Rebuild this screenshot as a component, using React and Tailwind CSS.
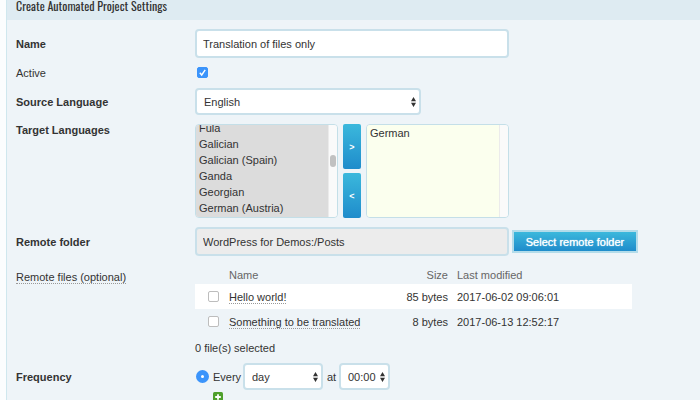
import { useEffect, useRef, useState } from "react";

const LANGUAGES = [
  "Croatian", "Czech", "Danish", "Divehi", "Dutch", "Dzongkha", "Esperanto",
  "Estonian", "Ewe", "Faroese", "Fijian", "Finnish", "French",
  "French (Canada)", "Fula", "Galician", "Galician (Spain)", "Ganda",
  "Georgian", "German (Austria)", "German (Switzerland)", "Greek", "Guarani",
  "Gujarati", "Haitian", "Hausa", "Hebrew", "Hindi", "Hungarian", "Icelandic",
  "Igbo", "Indonesian", "Irish", "Italian", "Japanese", "Javanese", "Kannada",
  "Kazakh", "Khmer", "Korean", "Kurdish", "Lao", "Latvian", "Lithuanian",
];

const FILES = [
  { name: "Hello world!", size: "85 bytes", modified: "2017-06-02 09:06:01" },
  { name: "Something to be translated", size: "8 bytes", modified: "2017-06-13 12:52:17" },
];

const OPTION_HEIGHT = 16;
const THUMB_HEIGHT = 12;
const field = "rounded border-2 border-[#c9e0ea] text-[11px] text-[#333] outline-none";
const blue = "bg-linear-to-b from-[#3bb8dc] to-[#1f8ccb] text-white";

function Row({ label, htmlFor, bold = true, top = false, labelClass = "", children }) {
  return (
    <div className={`grid grid-cols-[179px_1fr] ${top ? "items-start" : "items-center"}`}>
      <div className="flex">
        <label htmlFor={htmlFor} className={`${bold ? "font-bold" : ""} ${labelClass}`}>
          {label}
        </label>
      </div>
      <div className="min-w-0">{children}</div>
    </div>
  );
}

function Select({ id, label, className, options }) {
  return (
    <span className={`relative flex ${className}`}>
      <select
        id={id}
        aria-label={label}
        className={`${field} h-[27px] w-full appearance-none bg-white pl-[7px]`}
      >
        {options.map((o) => (
          <option key={o}>{o}</option>
        ))}
      </select>
      <svg
        viewBox="0 0 5 10"
        className="pointer-events-none absolute top-[9px] right-[5px] h-[10px] w-[5px] fill-[#333]"
        aria-hidden="true"
      >
        <path d="M2.5 0 5 4.2H0ZM2.5 10 0 5.8h5Z" />
      </svg>
    </span>
  );
}

function Listbox({ id, label, className, items, initial }) {
  const list = useRef(null);
  const [thumb, setThumb] = useState(null);

  const update = () => {
    const el = list.current;
    const range = el.scrollHeight - el.clientHeight;
    setThumb(range > 0 ? (el.scrollTop / range) * (el.clientHeight - THUMB_HEIGHT) : null);
  };

  useEffect(() => {
    if (initial) list.current.scrollTop = items.indexOf(initial) * OPTION_HEIGHT + 5;
    update();
  }, []);

  return (
    <div className="flex h-[94px] w-[143px] overflow-hidden rounded border border-[#c4dfe8]">
      <select
        id={id}
        ref={list}
        multiple
        aria-label={label}
        onScroll={update}
        className={`min-w-0 flex-1 overflow-y-auto py-[2px] text-[11px] outline-none [scrollbar-width:none] ${className}`}
      >
        {items.map((item) => (
          <option key={item} className="h-4 min-h-4 px-[3px] py-0 leading-4 text-[#333]">{item}</option>
        ))}
      </select>
      <div className="w-[9px] border-l border-[#ebebeb] bg-[#fafafa]" aria-hidden="true">
        {thumb !== null && (
          <div
            className="mx-auto h-3 w-[6px] rounded-full bg-[#c1c1c1]"
            style={{ marginTop: Math.round(thumb) }}
          />
        )}
      </div>
    </div>
  );
}

function Every() {
  return (
    <div className="flex items-center">
      <input
        id="every"
        type="radio"
        name="frequency"
        defaultChecked
        className="ml-[1px] size-[13px] appearance-none rounded-full border-[#3b94fb] bg-white checked:border-[5px]"
      />
      <label htmlFor="every" className="ml-1 w-[30px]">Every</label>
      <Select id="unit" label="Frequency unit" className="w-[80px]" options={["day", "week", "month"]} />
      <label htmlFor="time" className="ml-1 w-[12px]">at</label>
      <Select id="time" label="Time" className="w-[51px]" options={["00:00", "06:00", "12:00"]} />
    </div>
  );
}

export default function App() {
  const [active, setActive] = useState(true);

  return (
    <main className="h-screen overflow-hidden bg-[#fbfdfe] pl-[6px] font-['Liberation_Sans',Arial,sans-serif] text-[11px] leading-3 text-[#333]">
      <form className="min-h-full border-l border-[#cfe7ee] bg-[#eef4f8]" onSubmit={(e) => e.preventDefault()}>
        <h1 className="h-5 bg-[#deebf2] pl-[9px] font-[Oswald,'Roboto_Condensed','Open_Sans_Condensed',Roboto,sans-serif] text-[12px] leading-3 font-normal">
          Create Automated Project Settings
        </h1>
        <div className="flex flex-col gap-[9px] pt-[9px] pl-[9px]">
          <Row label="Name" htmlFor="name">
            <input
              id="name"
              defaultValue="Translation of files only"
              className={`${field} h-[29px] w-[314px] bg-white px-[6px]`}
            />
          </Row>

          <Row label="Active" htmlFor="active" bold={false}>
            <span className="relative ml-[2px] flex size-3">
              <input
                id="active"
                type="checkbox"
                checked={active}
                onChange={(e) => setActive(e.target.checked)}
                className="peer size-[11px] appearance-none rounded-[2px] border border-[#bbb] bg-white checked:border-[#3b94fb] checked:bg-[#3b94fb]"
              />
              <svg
                viewBox="0 0 11 11"
                className="pointer-events-none absolute top-0 left-0 hidden size-[11px] fill-none stroke-white peer-checked:block"
                aria-hidden="true"
              >
                <path d="M2.8 5.8 4.7 8 8.2 2.8" strokeWidth="1.4" />
              </svg>
            </span>
          </Row>

          <Row label="Source Language" htmlFor="source">
            <Select id="source" className="w-[226px]" options={["English", "French", "German"]} />
          </Row>

          <Row label="Target Languages" htmlFor="available" top>
            <div className="flex gap-[5px]">
              <Listbox id="available" className="bg-[#dcdcdc]" items={LANGUAGES} initial="Fula" />
              <div className="flex w-[18px] flex-col gap-1 text-[9px] font-bold">
                <button type="button" aria-label="Add" className={`${blue} flex-1 rounded-[2px]`}>&gt;</button>
                <button type="button" aria-label="Remove" className={`${blue} flex-1 rounded-[2px]`}>&lt;</button>
              </div>
              <Listbox label="Chosen languages" className="bg-[#fbffee]" items={["German"]} />
            </div>
          </Row>

          <Row label="Remote folder" htmlFor="folder">
            <div className="flex items-center gap-[3px]">
              <input
                id="folder"
                readOnly
                value="WordPress for Demos:/Posts"
                className={`${field} h-[29px] w-[314px] bg-[#ececec] px-[6px]`}
              />
              <button
                type="button"
                className={`${blue} h-[23px] w-[126px] border-2 border-[#b3dcea] bg-clip-padding [text-shadow:0_0_1px_#fff]`}
              >
                Select remote folder
              </button>
            </div>
          </Row>

          <Row
            label="Remote files (optional)"
            bold={false}
            top
            labelClass="mt-[6px] border-b border-dotted border-[#999]"
            htmlFor="file-0"
          >
            <table className="w-[437px] table-fixed border-collapse">
              <colgroup>
                <col className="w-[34px]" />
                <col className="w-[164px]" />
                <col className="w-[60px]" />
                <col />
              </colgroup>
              <thead>
                <tr className="h-[19px] text-left text-[#666]">
                  <td className="p-0" />
                  <th className="p-0 font-normal">Name</th>
                  <th className="p-0 pr-[5px] text-right font-normal">Size</th>
                  <th className="p-0 pl-1 font-normal">Last modified</th>
                </tr>
              </thead>
              <tbody>
                {FILES.map((f, i) => (
                  <tr key={f.name} className="h-[25px] odd:bg-white">
                    <td className="p-0 pl-[13px]">
                      <input
                        id={`file-${i}`}
                        type="checkbox"
                        className="block size-[11px] appearance-none rounded-[2px] border border-[#bdbdbd] bg-white checked:bg-[#3b94fb]"
                      />
                    </td>
                    <td className="p-0">
                      <label htmlFor={`file-${i}`} className="border-b border-dotted border-[#999]">{f.name}</label>
                    </td>
                    <td className="p-0 pr-[5px] text-right">{f.size}</td>
                    <td className="p-0 pl-1">{f.modified}</td>
                  </tr>
                ))}
              </tbody>
            </table>
            <p className="mt-[9px] leading-[11px]">0 file(s) selected</p>
          </Row>

          <Row label="Frequency" htmlFor="every" top labelClass="mt-2">
            <Every />
            <button type="button" aria-label="Add schedule" className="mt-[2px] ml-[18px] block">
              <svg viewBox="0 0 10 10" className="size-[10px]" aria-hidden="true">
                <rect width="10" height="10" rx="1.5" fill="#4fa02c" />
                <path d="M5 2.2v5.6M2.2 5h5.6" stroke="#fff" strokeWidth="1.8" />
              </svg>
            </button>
          </Row>
        </div>
      </form>
    </main>
  );
}
